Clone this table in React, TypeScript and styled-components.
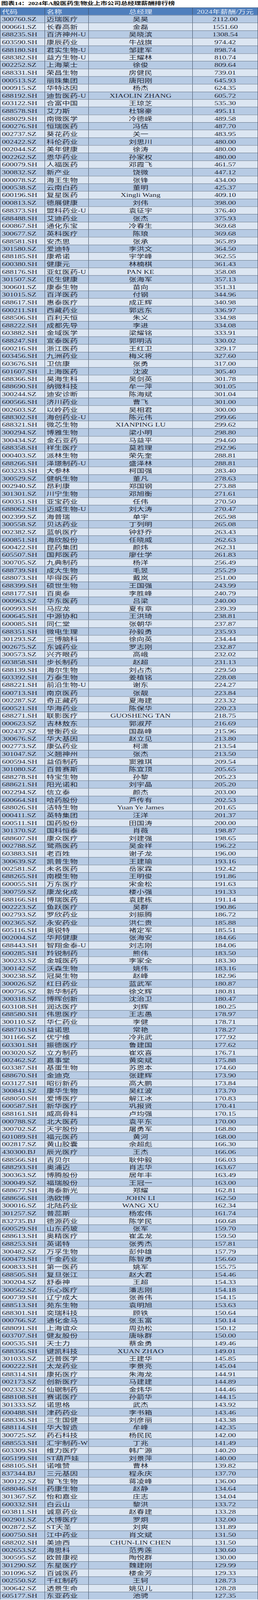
import React from "react";
import styled, { createGlobalStyle } from "styled-components";

/* The capture window is 4096px tall while the reference frame is 5928px:
   the full 5928px layout is laid out normally and fitted into the window. */
const FRAME_H = 4096;
const PAGE_H = 5928;

const GlobalStyle = createGlobalStyle`
  html, body { margin: 0; padding: 0; background: #ffffff; }
  #root { width: 660px; }
`;

const RAW = `300760.SZ|迈瑞医疗|吴昊|2112.00
000661.SZ|长春高新|金磊|1551.60
688235.SH|百济神州-U|吴晓滨|1308.54
603590.SH|康辰药业|牛战旗|974.42
688180.SH|君实生物-U|邹建军|898.74
688382.SH|益方生物-U|王耀林|810.74
002252.SZ|上海莱士|徐俊|809.64
688331.SH|荣昌生物|房健民|739.01
000513.SZ|丽珠集团|唐阳刚|645.93
000915.SZ|华特达因|杨杰|624.35
688192.SH|迪哲医药-U|XIAOLIN ZHANG|605.72
603122.SH|合富中国|王琼芝|535.30
688578.SH|艾力斯|杜锦豪|495.11
688029.SH|南微医学|冷德嵘|489.58
600276.SH|恒瑞医药|冯佶|487.70
002737.SZ|葵花药业|关一|483.95
002422.SZ|科伦药业|刘思川|480.00
002044.SZ|美年健康|徐涛|480.00
002262.SZ|恩华药业|孙家权|480.00
600079.SH|人福医药|邓霞飞|461.57
300832.SZ|新产业|饶微|447.12
000078.SZ|海王生物|张锋|434.00
000538.SZ|云南白药|董明|425.37
600196.SH|复星医药|Xingli Wang|409.10
000813.SZ|德展健康|刘伟|398.00
688373.SH|盟科药业-U|袁征宇|376.40
688488.SH|艾迪药业|张杰|375.93
600867.SH|通化东宝|冷春生|369.68
300677.SZ|英科医疗|陈琅|369.68
688581.SH|安杰思|张承|365.89
301580.SZ|爱迪特|李洪文|364.50
688185.SH|康希诺|宇学峰|362.55
600380.SH|健康元|林楠棋|361.43
688176.SH|亚虹医药-U|PAN KE|358.08
301507.SZ|民生健康|张海军|357.13
300601.SZ|康泰生物|苗向|351.31
301015.SZ|百洋医药|付钢|344.96
688617.SH|惠泰医疗|成正辉|340.98
600211.SH|西藏药业|郭远东|336.97
688506.SH|百利天恒|朱义|334.98
688222.SH|成都先导|李进|334.08
603882.SH|金域医学|梁耀铭|333.91
688247.SH|宣泰医药|郭明洁|330.02
600216.SH|浙江医药|王红卫|329.17
603456.SH|九洲药业|梅义将|327.60
603676.SH|卫信康|张勇|317.00
601607.SH|上海医药|沈波|305.40
688366.SH|昊海生科|吴剑英|301.78
688690.SH|纳微科技|牟一萍|301.05
300244.SZ|迪安诊断|陈海斌|301.04
600566.SH|济川药业|曹飞|301.00
002603.SZ|以岭药业|吴相君|300.00
688302.SH|海创药业-U|陈元伟|299.66
688321.SH|微芯生物|XIANPING LU|299.62
300294.SZ|博雅生物|梁小明|298.80
300434.SZ|金石亚药|马益平|294.60
688358.SH|祥生医疗|莫若理|292.96
000403.SZ|派林生物|荣先奎|288.81
688266.SH|泽璟制药-U|盛泽林|288.81
603233.SH|大参林|柯国强|283.40
300529.SZ|健帆生物|董凡|278.63
002940.SZ|昂利康|郑国钢|273.88
301301.SZ|川宁生物|邓旭衡|271.61
600351.SH|亚宝药业|任伟|270.50
688062.SH|迈威生物-U|刘大涛|270.47
002399.SZ|海普瑞|单宇|265.98
300558.SZ|贝达药业|丁列明|265.08
002382.SZ|蓝帆医疗|钟舒乔|263.43
600851.SH|海欣股份|任晓威|262.63
600422.SH|昆药集团|颜炜|262.31
605507.SH|国邦医药|廖仕学|261.83
300705.SZ|九典制药|杨洋|256.49
688739.SH|成大生物|毛昱|255.29
688073.SH|毕得医药|戴岚|251.00
688399.SH|硕世生物|王国强|243.99
688177.SH|百奥泰|李胜峰|240.79
000963.SZ|华东医药|吕梁|240.00
600993.SH|马应龙|夏有章|239.39
600645.SH|中源协和|王洪琦|238.81
600085.SH|同仁堂|张朝华|237.87
688351.SH|微电生理|孙毅勇|235.93
301293.SZ|三博脑科|徐向英|234.44
002675.SZ|东诚药业|罗志刚|232.87
300573.SZ|兴齐眼药|高峨|232.02
603858.SH|步长制药|赵超|231.13
688139.SH|海尔生物|刘占杰|229.50
603392.SH|万泰生物|姜植铭|228.08
688221.SH|前沿生物-U|谢东|224.27
600713.SH|南京医药|张靓|223.84
002287.SZ|奇正藏药|夏海建|223.32
600521.SH|华海药业|陈保华|220.23
688271.SH|联影医疗|GUOSHENG TAN|218.75
000623.SZ|吉林敖东|郭淑芹|216.69
002437.SZ|誉衡药业|国磊峰|215.96
300676.SZ|华大基因|赵立见|213.80
002773.SZ|康弘药业|柯潇|213.54
301047.SZ|义翘神州|张杰|213.50
600594.SH|益佰制药|窦雅琪|209.54
301080.SZ|百普赛斯|陈宜顶|205.65
688278.SH|特宝生物|孙黎|205.23
688621.SH|阳光诺和|刘宇晶|205.20
002294.SZ|信立泰|颜杰|203.00
600664.SH|哈药股份|芦传有|202.53
688026.SH|洁特生物|Yuan Ye James|201.65
000411.SZ|英特集团|汪洋|201.37
600511.SH|国药股份|田国涛|200.00
301370.SZ|国科恒泰|肖薇|198.87
688607.SH|康众医疗|刘建强|198.65
002788.SZ|鹭燕医药|吴金祥|196.22
603883.SH|老百姓|谢子龙|196.00
300639.SZ|凯普生物|王建瑜|193.16
002581.SZ|未名医药|岳家霖|192.42
688265.SH|南模生物|王明俊|191.86
600055.SH|万东医疗|宋金松|191.63
300759.SZ|康龙化成|楼小强|191.33
688166.SH|博瑞医药|袁建栋|191.14
002223.SZ|鱼跃医疗|吴群|190.86
002793.SZ|罗欣药业|刘振腾|186.72
002365.SZ|永安药业|洪仁贵|185.88
605116.SH|奥锐特|褚定军|185.51
002004.SZ|华邦健康|张海安|184.66
688443.SH|智翔金泰-U|刘志刚|184.06
600285.SH|羚锐制药|熊伟|183.50
300233.SZ|金城医药|李家全|183.30
300142.SZ|沃森生物|姚伟|183.16
300238.SZ|冠昊生物|赵峰|182.96
300026.SZ|红日药业|蓝武军|180.87
000756.SZ|新华制药|徐文辉|180.81
300318.SZ|博晖创新|沈治卫|180.47
603108.SH|润达医疗|刘辉|180.25
688580.SH|伟思医疗|王志愚|178.97
300110.SZ|华仁药业|李健|178.71
688710.SH|益诺思|常艳|178.27
301166.SZ|优宁维|冷兆武|177.92
603301.SH|振德医疗|鲁建国|177.62
003020.SZ|立方制药|崔欢喜|176.71
002462.SZ|嘉事堂|黄奕斌|175.88
603387.SH|基蛋生物|苏恩本|174.60
688670.SH|金迪克|张建辉|173.90
603127.SH|昭衍新药|高大鹏|173.84
300841.SZ|康华生物|吴红波|173.70
688050.SH|爱博医疗|解江冰|170.83
600587.SH|新华医疗|巩报贤|170.41
688161.SH|威高骨科|卢均强|170.15
000788.SZ|北大医药|袁平东|170.00
300702.SZ|天宇股份|屠勇军|168.80
601089.SH|福元医药|黄河|168.00
002817.SZ|黄山胶囊|余超彪|166.30
430300.BJ|辰光医疗|王杰|166.06
688566.SH|吉贝尔|耿仲毅|166.03
688293.SH|奥浦迈|肖志华|163.67
300363.SZ|博腾股份|居年丰|163.49
300049.SZ|福瑞股份|王冠一|163.00
688677.SH|海泰新光|郑耀|162.81
688656.SH|浩欧博|JOHN LI|162.50
300016.SZ|北陆药业|WANG XU|162.34
301257.SZ|普蕊斯|杨宏伟|161.74
832735.BJ|德源药业|陈学民|160.68
600529.SH|山东药玻|张军|159.70
688613.SH|奥精医疗|崔孟龙|159.50
688253.SH|英诺特|张秀杰|157.81
300482.SZ|万孚生物|彭仲雄|157.79
600479.SH|千金药业|陈智勇|156.60
600833.SH|第一医药|姚军|155.75
688505.SH|复旦张江|赵大君|154.46
300204.SZ|舒泰神|王超|154.33
300562.SZ|乐心医疗|潘志刚|154.18
600739.SH|辽宁成大|张善伟|154.15
688513.SH|苑东生物|袁明旭|153.63
688301.SH|奕瑞科技|顾铁|150.64
000766.SZ|通化金马|张玉富|150.14
688091.SH|上海谊众|周劲松|150.12
603707.SH|健友股份|唐咏群|150.00
600535.SH|天士力|蔡金勇|149.46
688356.SH|键凯科技|XUAN ZHAO|149.01
301033.SZ|迈普医学|王建华|145.85
600222.SH|太龙药业|李景亮|145.04
688314.SH|康拓医疗|朱海龙|144.91
002173.SZ|创新医疗|马建建|144.89
002332.SZ|仙琚制药|金炜华|144.46
688108.SH|赛诺医疗|孙箭华|144.15
301333.SZ|诺思格|武杰|143.92
600488.SH|津药药业|李书箱|143.46
688336.SH|三生国健|刘彦丽|143.38
688114.SH|华大智造|牟峰|142.35
300725.SZ|药石科技|杨民民|142.00
688553.SH|汇宇制药-W|丁兆|141.49
603309.SH|维力医疗|韩广源|140.20
605199.SH|ST葫芦娃|刘景萍|140.00
688105.SH|诺唯赞|曹林|139.82
837344.BJ|三元基因|程永庆|137.70
300122.SZ|智飞生物|蒋凌峰|136.00
688046.SH|药康生物|赵静|134.64
301367.SZ|怡和嘉业|庄志|134.04
600332.SH|白云山|黎洪|133.72
603811.SH|诚意药业|赵春建|133.28
002901.SZ|大博医疗|罗炯|132.00
002872.SZ|ST天圣|刘爽|131.89
600750.SH|江中药业|肖文斌|131.50
688202.SH|美迪西|CHUN-LIN CHEN|131.50
002653.SZ|海思科|范秀莲|130.60
300595.SZ|欧普康视|陶悦群|130.00
301290.SZ|东星医疗|魏建刚|129.99
301096.SZ|百诚医药|楼金芳|129.33
002550.SZ|千红制药|王轲|128.73
300642.SZ|透景生命|姚见儿|128.28
605177.SH|东亚药业|池骋|127.35`;

const ROWS = RAW.split("\n").map((l) => l.split("|"));

const LINE = "#3b4a5e";
const COLS = "113px 112px 266px 1fr";
const ROW_H = `${(PAGE_H - 56) / ROWS.length}px`;

const Frame = styled.div`
  width: 660px;
  height: ${FRAME_H}px;
  overflow: hidden;
`;

const Page = styled.div`
  width: 660px;
  height: ${PAGE_H}px;
  display: grid;
  grid-template-rows: 28px 28px repeat(${ROWS.length}, ${ROW_H});
  font-family: "Liberation Serif", "Noto Sans CJK SC", serif;
  transform: scaleY(${FRAME_H / PAGE_H});
  transform-origin: 0 0;
`;

const Title = styled.h1`
  margin: 0;
  display: flex;
  align-items: center;
  padding-left: 3px;
  font-family: "Liberation Serif", "Noto Sans CJK SC", serif;
  font-size: 17.5px;
  font-weight: 700;
  line-height: 1;
  color: #111;
  letter-spacing: -0.2px;
  background: #ffffff;
  overflow: hidden;
`;

const HeaderRow = styled.div`
  display: grid;
  grid-template-columns: ${COLS};
  background: #4f7fbd;
  border-top: 1px solid ${LINE};
  border-left: 1px solid ${LINE};
  border-right: 1px solid ${LINE};
  box-sizing: border-box;
  overflow: hidden;
  min-height: 0;
`;

const Row = styled.div<{ $dark: boolean }>`
  display: grid;
  grid-template-columns: ${COLS};
  box-sizing: border-box;
  border-top: 1px solid ${LINE};
  border-left: 1px solid ${LINE};
  border-right: 1px solid ${LINE};
  background: ${(p) => (p.$dark ? "#b7cbe4" : "#dce6f2")};
  overflow: hidden;
  min-height: 0;
`;

const Cell = styled.div<{ $align: "left" | "center"; $head?: boolean }>`
  display: flex;
  align-items: center;
  justify-content: ${(p) => (p.$align === "left" ? "flex-start" : "center")};
  padding-left: ${(p) => (p.$align === "left" ? "4px" : "0")};
  padding-top: 1px;
  font-size: 20px;
  line-height: 20px;
  white-space: nowrap;
  overflow: hidden;
  min-height: 0;
  color: ${(p) => (p.$head ? "#e4ecf7" : "#1e2634")};
  & + & {
    border-left: 1px solid ${LINE};
  }
`;

export default function App() {
  return (
    <>
      <GlobalStyle />
      <Frame>
        <Page>
          <Title>图表14：2024年A股医药生物业上市公司总经理薪酬排行榜</Title>
          <HeaderRow>
            <Cell $align="left" $head>代码</Cell>
            <Cell $align="left" $head>名称</Cell>
            <Cell $align="center" $head>总经理</Cell>
            <Cell $align="center" $head>2024年薪酬/万元</Cell>
          </HeaderRow>
          {ROWS.map((r, i) => (
            <Row key={r[0] + i} $dark={i % 2 === 0}>
              <Cell $align="left">{r[0]}</Cell>
              <Cell $align="left">{r[1]}</Cell>
              <Cell $align="center">{r[2]}</Cell>
              <Cell $align="center">{r[3]}</Cell>
            </Row>
          ))}
        </Page>
      </Frame>
    </>
  );
}
